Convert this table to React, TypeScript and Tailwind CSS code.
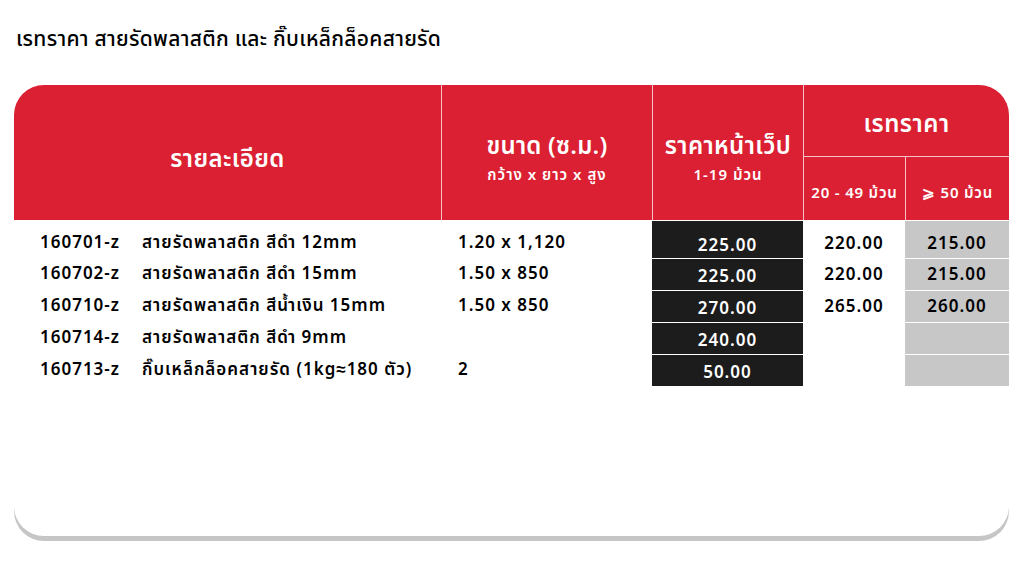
import React from "react";

type Row = {
  code: string;
  name: string;
  size: string;
  web: string;
  tier1: string;
  tier2: string;
};

const rows: Row[] = [
  { code: "160701-z", name: "สายรัดพลาสติก สีดำ 12mm", size: "1.20 x 1,120", web: "225.00", tier1: "220.00", tier2: "215.00" },
  { code: "160702-z", name: "สายรัดพลาสติก สีดำ 15mm", size: "1.50 x 850", web: "225.00", tier1: "220.00", tier2: "215.00" },
  { code: "160710-z", name: "สายรัดพลาสติก สีน้ำเงิน 15mm", size: "1.50 x 850", web: "270.00", tier1: "265.00", tier2: "260.00" },
  { code: "160714-z", name: "สายรัดพลาสติก สีดำ 9mm", size: "", web: "240.00", tier1: "", tier2: "" },
  { code: "160713-z", name: "กิ๊บเหล็กล็อคสายรัด (1kg≈180 ตัว)", size: "2", web: "50.00", tier1: "", tier2: "" },
];

const font = { fontFamily: '"Noto Sans Thai", "Noto Sans", "Liberation Sans", sans-serif' };

const App = () => {
  return (
    <div className="w-[1024px] h-[576px] bg-white text-black overflow-hidden" style={font}>
      <h1 className="pl-[16px] pt-[27px] h-[85px] text-[21px] leading-[26px] font-medium tracking-[0.3px]">
        เรทราคา สายรัดพลาสติก และ กิ๊บเหล็กล็อคสายรัด
      </h1>

      <div className="ml-[14px] w-[995px] h-[451px] bg-white rounded-[30px] shadow-[0_5px_0_#c6c6c6]">
        {/* header */}
        <div className="grid grid-cols-[427px_211px_151px_102px_104px] grid-rows-[72px_63px] bg-[#da2032] text-white rounded-t-[30px] font-semibold">
          <div className="row-span-2 flex items-center justify-center pt-[14px] text-[24px] tracking-[0.4px]">รายละเอียด</div>
          <div className="row-span-2 border-l border-[#f3c3c8] flex flex-col items-center justify-center pt-[14px]">
            <span className="text-[24px] leading-[28px] tracking-[0.2px]">ขนาด (ซ.ม.)</span>
            <span className="mt-[4px] text-[15px] leading-[22px] tracking-[1px]">กว้าง x ยาว x สูง</span>
          </div>
          <div className="row-span-2 border-l border-[#f3c3c8] flex flex-col items-center justify-center pt-[14px]">
            <span className="text-[24px] leading-[28px] tracking-[0.4px]">ราคาหน้าเว็ป</span>
            <span className="mt-[4px] text-[15px] leading-[22px] tracking-[1px]">1-19 ม้วน</span>
          </div>
          <div className="col-span-2 border-l border-b border-[#f3c3c8] rounded-tr-[30px] flex items-center justify-center pt-[8px] text-[24px] tracking-[0.5px]">
            เรทราคา
          </div>
          <div className="border-l border-[#f3c3c8] flex items-center justify-center pt-[12px] text-[15px] tracking-[0.8px]">
            20 - 49 ม้วน
          </div>
          <div className="border-l border-[#f3c3c8] flex items-center justify-center pt-[12px] text-[15px] tracking-[0.8px]">
            ⩾ 50 ม้วน
          </div>
        </div>

        {/* body */}
        <div className="grid grid-cols-[427px_211px_151px_102px_104px] grid-rows-[37px_31px_31px_31px_31px] gap-y-px pt-px text-[17px] tracking-[1px] font-semibold">
          {rows.map((r, i) => (
            <React.Fragment key={r.code}>
              <div className={`flex items-center pl-[26px] ${i === 0 ? "pt-[8px]" : ""}`}>
                <span className="w-[102px]">{r.code}</span>
                <span>{r.name}</span>
              </div>
              <div className={`flex items-center pl-[17px] ${i === 0 ? "pt-[8px]" : ""}`}>{r.size}</div>
              <div className={`flex items-center justify-center bg-[#1c1c1c] text-white ${i === 0 ? "pt-[15px]" : "pt-[6px]"}`}>
                {r.web}
              </div>
              <div className={`flex items-center justify-center ${i === 0 ? "pt-[10px]" : "pt-[2px]"}`}>{r.tier1}</div>
              <div className={`flex items-center justify-center bg-[#c7c7c7] ${i === 0 ? "pt-[10px]" : "pt-[2px]"}`}>{r.tier2}</div>
            </React.Fragment>
          ))}
        </div>
      </div>
    </div>
  );
};

export default App;
